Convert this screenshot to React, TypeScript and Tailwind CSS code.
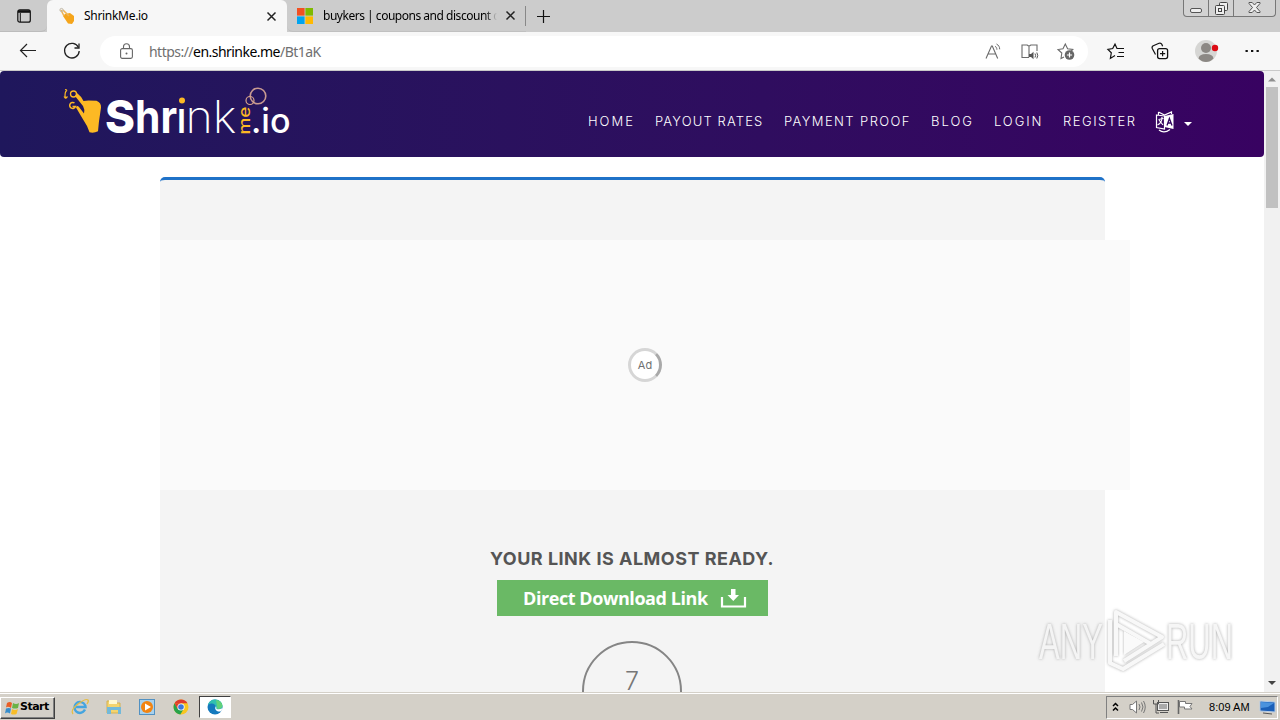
import type { ReactNode } from 'react'

const NAV_LINKS = [
  { label: 'HOME', cls: 'w-[67px] tracking-[2px]' },
  { label: 'PAYOUT RATES', cls: 'w-[129px] tracking-[1.15px]' },
  { label: 'PAYMENT PROOF', cls: 'w-[147px] tracking-[1.4px]' },
  { label: 'BLOG', cls: 'w-[63px] tracking-[2px]' },
  { label: 'LOGIN', cls: 'w-[69px] tracking-[1.9px]' },
  { label: 'REGISTER', cls: 'w-[92px] tracking-[1.5px]' }
]

function Svg({ w, h, className, children }: { w: number; h: number; className?: string; children: ReactNode }) {
  return (
    <svg width={w} height={h} viewBox={`0 0 ${w} ${h}`} fill="none" className={`block shrink-0 overflow-visible ${className ?? ''}`}>
      {children}
    </svg>
  )
}

function CloseIcon() {
  return (
    <Svg w={9} h={9}>
      <path d="M.5.5l8 8M8.500.5l-8 8" stroke="#222" strokeWidth="1.5" />
    </Svg>
  )
}

function TabBar() {
  return (
    <div className="flex h-8 shrink-0 bg-[#cccccc] text-[12px] text-black">
      <div className="flex h-8 w-[47px] items-center rounded-br-md border-b border-[#bcbcbc] pl-[17px]">
        <Svg w={15} h={14}>
          <rect x="0.8" y="0.8" width="12.5" height="12.4" rx="2" stroke="#111" strokeWidth="1.2" />
          <path d="M1 2.500h12" stroke="#111" strokeWidth="2.6" />
          <path d="M3.300 4v9" stroke="#111" />
        </Svg>
      </div>
      <div className="flex h-8 w-[240px] items-center rounded-t-md bg-[#f7f7f7] pl-[12px]">
        <Svg w={16} h={18}>
          <path d="M6 7l5-1 4 3v5l-2 3-4-.5-5-7.500z" fill="#f5a51b" />
          <path d="M5 9L2 3M8 7L4 3M10 9l-3-3" stroke="#efb454" strokeWidth="1.6" />
          <circle cx="2.500" cy="3" r="1.600" stroke="#bfb8a8" />
        </Svg>
        <span className="ml-[9px] w-[183px] tracking-[-0.3px] whitespace-nowrap">ShrinkMe.io</span>
        <CloseIcon />
      </div>
      <div className="flex h-8 w-[239px] items-center rounded-bl-md border-b border-[#c0c0c0] pl-[10px]">
        <Svg w={16} h={16}>
          <path d="M0 0h7.6v7.6H0z" fill="#f25022" />
          <path d="M8.4 0H16v7.6H8.4z" fill="#7fba00" />
          <path d="M0 8.4h7.6V16H0z" fill="#00a4ef" />
          <path d="M8.4 8.4H16V16H8.4z" fill="#ffb900" />
        </Svg>
        <span className="ml-[10px] w-[174px] overflow-hidden tracking-[-0.48px] whitespace-nowrap [mask-image:linear-gradient(to_right,black_93%,transparent)]">
          buykers | coupons and discount c
        </span>
        <span className="ml-[9px]">
          <CloseIcon />
        </span>
        <span className="ml-auto h-5 w-px bg-[#888]" />
      </div>
      <div className="flex h-8 items-center pl-[10px]">
        <Svg w={15} h={15}>
          <path d="M7.5 1v13M1 7.5h13" stroke="#111" strokeWidth="1.2" />
        </Svg>
      </div>
      <div className="mr-[4px] ml-auto flex h-[17px] w-[93px] rounded-b-[4px] border border-t-0 border-[#777] bg-[#d2d2d2]">
        <div className="flex w-[25px] justify-center border-r border-[#777] pt-[8px]">
          <Svg w={12} h={5}>
            <rect x="0.5" y="0.5" width="11" height="4" rx="1.5" fill="#eee" stroke="#555" />
          </Svg>
        </div>
        <div className="flex w-[25px] justify-center border-r border-[#777] pt-[2px]">
          <Svg w={13} h={13}>
            <rect x="4.5" y="0.5" width="8" height="8" rx="1" fill="#eee" stroke="#444" />
            <rect x="0.5" y="3.5" width="9" height="9" rx="1" fill="#eee" stroke="#444" />
            <rect x="3.5" y="6.5" width="3" height="3" stroke="#444" />
          </Svg>
        </div>
        <div className="flex flex-1 justify-center pt-[2px]">
          <Svg w={13} h={11}>
            <path d="M1 .5h3.2L6.5 3 8.8.5H12v1L8.5 5.5 12 9.5v1H8.8L6.5 8l-2.3 2.5H1v-1l3.5-4L1 1.5z" fill="#eee" stroke="#555" />
          </Svg>
        </div>
      </div>
    </div>
  )
}

function Toolbar() {
  return (
    <div className="flex h-[39px] shrink-0 items-center border-b border-[#c9c9c9] bg-[#f7f7f7]">
      <Svg w={18} h={16} className="ml-[19px]">
        <path d="M17 7.500H1.500M8 1L1.500 7.500 8 14" stroke="#222" strokeWidth="1.2" />
      </Svg>
      <Svg w={18} h={18} className="ml-[26px]">
        <path d="M15.500 5.500A7.300 7.300 0 1 0 16.200 9" stroke="#222" strokeWidth="1.300" />
        <path d="M16 1.500v4.500h-4.500" stroke="#222" strokeWidth="1.300" />
      </Svg>
      <div className="ml-[19px] flex h-[31px] w-[988px] items-center rounded-full bg-white pl-[20px]">
        <Svg w={13} h={17}>
          <rect x="0.6" y="5.6" width="11.8" height="9.8" rx="1.6" stroke="#666" strokeWidth="1.1" />
          <path d="M3.5 5.5V3.8a3 3 0 0 1 6 0v1.7" stroke="#666" strokeWidth="1.1" />
          <circle cx="6.5" cy="10.5" r="1" fill="#666" />
        </Svg>
        <span className="ml-[16px] text-[14px] tracking-[-0.53px] whitespace-nowrap text-[#707070]">
          https://<span className="text-black">en.shrinke.me</span>/Bt1aK
        </span>
        <Svg w={17} h={17} className="ml-auto">
          <path d="M1 15.500L6.500 3h.8l5.400 12.500M3 11h8" stroke="#6b6b6b" strokeWidth="1.1" />
          <path d="M10 3.2c1.3.8 1.9 2 1.9 3.5M11.5 1c2.2 1.2 3.2 3 3.2 5.3" stroke="#6b6b6b" />
        </Svg>
        <Svg w={19} h={17} className="ml-[18px]">
          <path d="M9 14.5H2V2h5.2L9 3.3 10.800 2H17v6M9 3.300v11" stroke="#6b6b6b" strokeWidth="1.1" />
          <path d="M9 11h2l2.500-2.200v7.400L11 14H9z" fill="#555" />
          <path d="M15 10.500q1.200 2 0 4M16.800 9.500q1.900 3 0 6" stroke="#555" />
        </Svg>
        <Svg w={18} h={18} className="mr-[13px] ml-[18px]">
          <path d="M7 15l-3 1.500.8-5.500-3.800-3.500 5-.8L8.300 2l2.300 4.700 5.200.8-2 2" stroke="#6b6b6b" strokeWidth="1.1" />
          <circle cx="12.500" cy="13" r="4.800" fill="#666" />
          <path d="M12.500 10.400v5.200M9.900 13h5.200" stroke="#fff" strokeWidth="1.200" />
        </Svg>
      </div>
      <Svg w={18} h={17} className="ml-[19px]">
        <path d="M8 12.500l-4.600 2.900.9-5.600L.9 6.300l4.800-.8L8 1.200l2 4.300h7M11.500 9.500H17M10 13.500h7" stroke="#111" strokeWidth="1.200" />
      </Svg>
      <Svg w={18} h={18} className="ml-[26px]">
        <rect x="6.600" y="6.600" width="10" height="10" rx="2" stroke="#111" strokeWidth="1.300" />
        <path d="M11.600 9v5.200M9 11.600h5.200M4.500 12.500L1.300 6.500q-.8-2 1-2.800L8 1.200q2-.6 2.800 1l.8 2" stroke="#111" strokeWidth="1.200" />
      </Svg>
      <Svg w={24} h={24} className="ml-[26px]">
        <circle cx="11" cy="12" r="11" fill="#d6d6d4" />
        <circle cx="11" cy="9" r="5" fill="#8c8884" />
        <path d="M3.500 19.500Q4 15 11 15t7.500 4.500Q15 23 11 23t-7.500-3.500" fill="#8c8884" />
        <circle cx="20" cy="9" r="3.200" fill="#dc0b14" />
      </Svg>
      <Svg w={14} h={4} className="ml-[26px]">
        <path d="M.5 1h2.300v2H.5zM6 1h2.300v2H6zM11.500 1h2.300v2h-2.300z" fill="#111" />
      </Svg>
    </div>
  )
}

function Logo() {
  return (
    <Svg w={230} h={56}>
      <path
        d="M14 7q4 3 6.500 8l5-.5 8 .3q5 2 4.500 7l-2 13.500-1 10q-4 2-8.500 1L24 40l-6-10-5-8.500q1-2.500 3-.5l5 6.500q1-4-1-7.500L12 10z"
        fill="#fdb924"
      />
      <circle cx="10.500" cy="8" r="3" stroke="#fdb924" strokeWidth="1.300" />
      <path d="M4 4q-3 3-1.500 8M2.500 12.500L1 10.500M2.500 12.500l2-2M4 4L2 3.500" stroke="#fdb924" strokeWidth="1.200" />
      <path d="M11.500 17A3 3 0 1 0 12.500 20.500h-3" stroke="#fdb924" strokeWidth="1.500" />
      <g fontFamily="Inter, sans-serif" fill="#fff">
        <text x="42" y="47" fontSize="45" fontWeight="800" textLength="30" lengthAdjust="spacingAndGlyphs">S</text>
        <text x="72" y="47" fontSize="45" fontWeight="700" textLength="42" lengthAdjust="spacingAndGlyphs">hr</text>
        <text x="114.500" y="47" fontSize="44" fontWeight="700" textLength="8" lengthAdjust="spacingAndGlyphs">ı</text>
        <text x="122.500" y="47" fontSize="45" fontWeight="200" textLength="51" lengthAdjust="spacingAndGlyphs">nk</text>
        <text x="188" y="47" fontSize="34" fontWeight="500" textLength="39.500" lengthAdjust="spacingAndGlyphs">.io</text>
        <text transform="translate(186.500 48.500) rotate(-90)" fontSize="15" fontWeight="500" fill="#fdb924" textLength="28" lengthAdjust="spacingAndGlyphs">me</text>
      </g>
      <circle cx="119" cy="14.500" r="3" fill="#fdb924" />
      <circle cx="195" cy="10" r="7.800" stroke="#c89a91" strokeWidth="1.600" />
      <circle cx="187" cy="14.500" r="4" stroke="#d8a48c" strokeWidth="1.200" />
    </Svg>
  )
}

function Navbar() {
  return (
    <nav className="flex h-[86px] rounded-[4px] bg-gradient-to-r from-[#1f175c] to-[#380261] pl-[63px] font-[Inter,sans-serif]">
      <div className="w-[525px] pt-[15px]">
        <Logo />
      </div>
      <div className="flex items-center pt-[15px] text-[13px] font-light text-white">
        {NAV_LINKS.map((link) => (
          <a key={link.label} className={`whitespace-nowrap ${link.cls}`}>
            {link.label}
          </a>
        ))}
        <Svg w={20} h={22}>
          <path d="M1.500 4l8 1v13l-8-1.500zM3.500 1v3M4 19q5 4 11-.5" stroke="#fff" strokeWidth="1.200" />
          <path d="M9.500 5l9-2v15l-9-2z" fill="#fff" />
          <path d="M3.500 1l6 3 7-3v2M3.500 8.500l5-1M7 6q0 6-4.500 8M4 9l4 5" stroke="#fff" strokeWidth="1.200" />
          <path d="M12 14.500l2.400-7 2.600 7M13 12h3.500" stroke="#320561" strokeWidth="1.300" />
        </Svg>
        <Svg w={8} h={4} className="mt-[5px] ml-[9px]">
          <path d="M0 0h8L4 4z" fill="#fff" />
        </Svg>
      </div>
    </nav>
  )
}

function LinkCard() {
  return (
    <main className="mt-[20px] ml-[160px] h-[600px] w-[945px] rounded-t-[5px] border-t-[3px] border-[#1f72c8] bg-[#f4f4f4] pt-[60px]">
      <div className="flex h-[250px] w-[970px] items-center justify-center bg-[#fafafa]">
        <div className="flex size-[34px] items-center justify-center rounded-full border-[3px] border-[#d6d6d6] border-r-[#a9a9a9] bg-white font-[Inter,sans-serif] text-[11px] text-[#707070]">
          Ad
        </div>
      </div>
      <div className="flex w-[944px] flex-col items-center">
        <h1 className="mt-[55px] h-[28px] font-[Inter,sans-serif] text-[18px] leading-[28px] font-bold tracking-[0.48px] whitespace-nowrap text-[#555]">
          YOUR LINK IS ALMOST READY.
        </h1>
        <button className="mt-[7px] ml-px flex h-[36px] w-[271px] items-center bg-[#6ab965] pl-[26px] font-['Open_Sans',sans-serif] text-[18px] font-bold text-white">
          <span className="w-[197px] text-left tracking-[-0.43px] whitespace-nowrap">Direct Download Link</span>
          <Svg w={27} h={20}>
            <path d="M2 9v9.500h23V9" stroke="#fff" strokeWidth="2.200" />
            <path d="M11 1h4.500v6H19l-5.700 6L7.500 7H11z" fill="#fff" />
          </Svg>
        </button>
        <div className="mt-[25px] flex size-[100px] justify-center rounded-full border-2 border-[#858585] pt-[20px] font-[Inter,sans-serif] text-[25px] font-light text-[#777]">
          7
        </div>
      </div>
    </main>
  )
}

function Scrollbar() {
  return (
    <div className="flex w-4 flex-col items-center bg-[#f1f1f1]">
      <Svg w={8} h={16}>
        <path d="M0 10.500l4-4 4 4z" fill="#8f8f8f" />
      </Svg>
      <div className="h-[121px] w-[12px] bg-[#c1c1c1]" />
      <Svg w={8} h={16} className="mt-auto">
        <path d="M0 5h8L4 9z" fill="#444" />
      </Svg>
    </div>
  )
}

function Watermark() {
  return (
    <div className="absolute top-[605px] left-[1032px]">
      <Svg w={208} h={72}>
        <g className="[filter:drop-shadow(0_0_1.500px_#999)]" opacity="0.8">
          <g fontFamily="'Liberation Sans', sans-serif" fontSize="50" fill="#f4f4f4">
            <text x="7" y="54" textLength="64" lengthAdjust="spacingAndGlyphs">ANY</text>
            <text x="134" y="54" textLength="67" lengthAdjust="spacingAndGlyphs">RUN</text>
          </g>
          <path d="M84 51V7l46 25-38 24M78 15v43l13 6 41-25M84 19l35 20" stroke="#f7f7f7" strokeWidth="4" strokeLinejoin="round" />
          <path d="M92 26l20 11-20 13z" fill="#fafafa" />
        </g>
      </Svg>
    </div>
  )
}

function Taskbar() {
  return (
    <div className="flex h-[28px] shrink-0 items-center border-t border-[#d4d0c8] bg-[#d4d0c8] shadow-[inset_0_1px_0_#fff]">
      <div className="mt-[2px] flex h-[22px] w-[55px] items-center border border-t-white border-r-[#404040] border-b-[#404040] border-l-white pl-[3px] shadow-[inset_-1px_-1px_0_#808080]">
        <Svg w={16} h={16}>
          <path d="M3 3q3-2 5 0L7 8Q4 6 2 7.500z" fill="#e95e26" />
          <path d="M9 3q3 2 6 0l-1 5q-3 1-6 0z" fill="#6ab245" />
          <path d="M2 8.500q3-1 5 0l-1 5q-3-2-5 0z" fill="#368dcc" />
          <path d="M8 9q3 2 6 0l-1.500 5q-3 1-5.500 0z" fill="#f8bd28" />
        </Svg>
        <span className="font-['DejaVu_Sans',sans-serif] text-[11px] font-bold tracking-[-0.5px] text-black">Start</span>
      </div>
      <Svg w={18} h={18} className="ml-[16px]">
        <path d="M14 11.500q-2 3.500-5 3.500a5.500 5.500 0 1 1 5.500-6H5" stroke="#45a5df" strokeWidth="2.500" />
        <path d="M2 16Q-1 12 7 6t10-4q1 1-1 4" stroke="#e6bd42" strokeWidth="1.300" />
      </Svg>
      <Svg w={18} h={18} className="ml-[16px]">
        <path d="M2 3h5l1 2h7v10H2z" fill="#f4d46d" stroke="#d4b153" />
        <path d="M4 2h8v4H4z" fill="#fff8d0" />
        <path d="M2 9h14v7h-3v-4H6v4H2z" fill="#72b9da" />
      </Svg>
      <Svg w={16} h={16} className="ml-[16px]">
        <rect x="0.500" y="0.500" width="15" height="15" fill="#a8d1ed" stroke="#5291c2" />
        <circle cx="8" cy="8" r="6" fill="#f28412" />
        <path d="M6 4.500l6 3.500-6 3.500z" fill="#fff" />
      </Svg>
      <Svg w={16} h={16} className="ml-[18px]">
        <circle cx="8" cy="8" r="7.500" fill="#f8c620" />
        <path d="M1.500 4.300A7.500 7.500 0 0 1 14.500 4.300H8z" fill="#df3b2e" />
        <path d="M1.500 4.300A7.500 7.500 0 0 0 7.300 15.500L11 9.500 5 10z" fill="#27a34b" />
        <path d="M1.500 4.300L4.700 10 8 4.300z" fill="#df3b2e" />
        <circle cx="8" cy="8" r="3.600" fill="#fff" />
        <circle cx="8" cy="8" r="2.800" fill="#3b78dc" />
      </Svg>
      <div className="mt-[1px] ml-[10px] flex h-[22px] w-[32px] items-center justify-center border border-t-[#404040] border-r-white border-b-white border-l-[#404040] bg-white">
        <Svg w={16} h={16}>
          <circle cx="8" cy="8" r="7.500" fill="#1479bd" />
          <path d="M.8 6Q3 0 8.500.5 15 1 15.500 7q0 4-5.500 3.500-2 0-1-2.500Q8 4 4 4.500 1.500 5 .8 6" fill="#31bfb0" />
          <path d="M9 1q6 1 6.500 6-1 3-5 3z" fill="#62d17a" />
          <path d="M9 7q-2 3 1 5 2 1 4.500 0l1-3q-3 2-6 1z" fill="#fff" />
        </Svg>
      </div>
      <div className="mt-[1px] mr-[2px] ml-auto flex h-[23px] w-[172px] items-center border border-t-[#808080] border-r-white border-b-white border-l-[#808080] pl-[5px]">
        <Svg w={7} h={10}>
          <path d="M1 4l2.500-2.500L6 4M1 8.500L3.500 6 6 8.500" stroke="#000" strokeWidth="1.500" />
        </Svg>
        <Svg w={17} h={16} className="ml-[10px]">
          <path d="M1 5.500h2.500L7.500 2v12l-4-3.500H1z" fill="#fff" stroke="#777" />
          <path d="M10 5q2 3 0 6M12.500 3.500q3 4.500 0 9M14.500 2q3.500 6 0 12" stroke="#777" />
        </Svg>
        <Svg w={17} h={16} className="ml-[7px]">
          <rect x="4.500" y="3.500" width="11" height="8" fill="#eee" stroke="#555" />
          <path d="M7 13.500h8M.5 1v4h5V1M3 5v9h3" stroke="#555" />
          <path d="M6 5h8v5H6z" fill="#aaa" />
        </Svg>
        <Svg w={17} h={16} className="ml-[7px]">
          <path d="M1.500 1v14" stroke="#666" strokeWidth="1.600" />
          <path d="M2.500 2.500h6v2h6.500l-2 3 2 2.500H7.500V8h-5z" fill="#fff" stroke="#777" />
        </Svg>
        <span className="ml-[15px] w-[50px] font-['Liberation_Sans',sans-serif] text-[11px] tracking-[0.05px] whitespace-nowrap text-black">8:09 AM</span>
        <Svg w={17} h={15}>
          <path d="M1 1l15 1v10L1 11z" fill="#1b5fb8" stroke="#b7cce5" />
          <path d="M2 2l13 1-6 4-7 1z" fill="#4a92de" />
          <path d="M4 13l9 1" stroke="#555" />
        </Svg>
      </div>
    </div>
  )
}

export default function App() {
  return (
    <div className="relative flex h-[720px] w-[1280px] flex-col overflow-hidden bg-white font-['Noto_Sans',sans-serif]">
      <TabBar />
      <Toolbar />
      <div className="flex h-[621px] shrink-0">
        <div className="h-full w-[1264px] overflow-hidden">
          <Navbar />
          <LinkCard />
        </div>
        <Scrollbar />
      </div>
      <Taskbar />
      <Watermark />
    </div>
  )
}
